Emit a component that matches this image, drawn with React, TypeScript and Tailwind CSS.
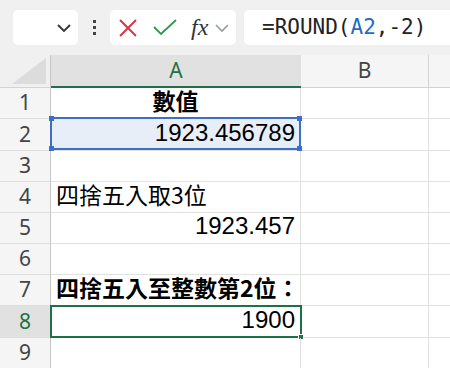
import React from "react";

const numFont = "font-['Liberation_Sans',Arial,sans-serif] leading-none mb-[4px]";
const cjkFont = "font-['Noto_Sans_CJK_TC','Noto_Sans',sans-serif]";
const hdrFont = "font-['Noto_Sans','Open_Sans',sans-serif]";

function Toolbar() {
  return (
    <div className="h-[55px] bg-[#f0f0f0] flex items-center pl-[13px]">
      <div className="w-[65px] h-[35px] bg-white rounded-[5px] flex items-center justify-end pr-[6px]">
        <svg width="16" height="10" viewBox="0 0 16 10">
          <path d="M2 2 L8 8 L14 2" fill="none" stroke="#333" strokeWidth="1.8" />
        </svg>
      </div>
      <div className="w-[32px] flex flex-col items-center gap-[3px]">
        <span className="w-[3px] h-[3px] bg-[#444]" />
        <span className="w-[3px] h-[3px] bg-[#444]" />
        <span className="w-[3px] h-[3px] bg-[#444]" />
      </div>
      <div className="w-[126px] h-[35px] bg-white rounded-[5px] flex items-center pl-[8px]">
        <svg width="20" height="20" viewBox="0 0 20 20">
          <path d="M2 2 L18 18 M18 2 L2 18" stroke="#d9303b" strokeWidth="1.8" />
        </svg>
        <svg width="26" height="20" viewBox="0 0 26 20" className="ml-[14px]">
          <path d="M2 9 L9 16 L24 2" fill="none" stroke="#2e9a4f" strokeWidth="1.8" />
        </svg>
        <span className="ml-[13px] font-['Liberation_Serif',serif] italic text-[24px] leading-none text-[#333] -mt-[2px]">
          fx
        </span>
        <svg width="16" height="10" viewBox="0 0 16 10" className="ml-[6px]">
          <path d="M2 2 L8 8 L14 2" fill="none" stroke="#9a9a9a" strokeWidth="1.6" />
        </svg>
      </div>
      <div className="ml-[8px] flex-1 h-[35px] bg-white rounded-l-[5px] flex items-center pl-[18px]">
        <span className="font-['DejaVu_Sans_Mono',monospace] text-[21px] text-[#222] leading-none">
          =ROUND(<span className="text-[#1f6cc0]">A2</span>,-2)
        </span>
      </div>
    </div>
  );
}

type Row = {
  n: number;
  h: string;
  content?: React.ReactNode;
  align?: string;
  sel?: "ref" | "active";
};

const rows: Row[] = [
  {
    n: 1,
    h: "h-[31px]",
    align: "justify-center",
    content: <span className={`${cjkFont} font-bold text-[23px]`}>數值</span>,
  },
  {
    n: 2,
    h: "h-[32px]",
    align: "justify-end pr-[5px]",
    content: <span className={`${numFont} text-[24px]`}>1923.456789</span>,
    sel: "ref",
  },
  { n: 3, h: "h-[31px]" },
  {
    n: 4,
    h: "h-[31px]",
    align: "justify-start pl-[5px]",
    content: <span className={`${cjkFont} text-[23px]`}>四捨五入取3位</span>,
  },
  {
    n: 5,
    h: "h-[31px]",
    align: "justify-end pr-[5px]",
    content: <span className={`${numFont} text-[24px]`}>1923.457</span>,
  },
  { n: 6, h: "h-[31px]" },
  {
    n: 7,
    h: "h-[31px]",
    align: "justify-start pl-[5px]",
    content: (
      <span className={`${cjkFont} font-bold text-[23px] whitespace-nowrap`}>
        四捨五入至整數第2位：
      </span>
    ),
  },
  {
    n: 8,
    h: "h-[32px]",
    align: "justify-end pr-[5px]",
    content: <span className={`${numFont} text-[24px]`}>1900</span>,
    sel: "active",
  },
  { n: 9, h: "h-[31px]" },
];

export default function App() {
  return (
    <div className="w-[450px] h-[368px] overflow-hidden bg-white">
      <Toolbar />
      <div className={`flex h-[33px] ${hdrFont} text-[21px]`}>
        <div className="w-[51px] bg-[#f0f0f0] border-r border-[#c6c6c6] border-b border-b-[#d4d4d4] flex items-end justify-end">
          <div className="w-0 h-0 border-l-[34px] border-l-transparent border-b-[26px] border-b-[#dcdcdc] mr-[4px] mb-[3px]" />
        </div>
        <div className="w-[250px] bg-[#e1e1e1] border-b-2 border-[#1e7145] flex items-center justify-center text-[#1e7145]">
          A
        </div>
        <div className="w-[128px] bg-[#f5f5f5] border-r border-[#d4d4d4] border-b border-b-[#d4d4d4] flex items-center justify-center text-[#444]">
          B
        </div>
        <div className="flex-1 bg-[#f5f5f5] border-b border-b-[#d4d4d4]" />
      </div>
      {rows.map((r) => (
        <div key={r.n} className={`flex ${r.h}`}>
          <div
            className={`w-[51px] border-r border-[#c6c6c6] border-b border-b-[#dedede] flex items-center justify-center ${hdrFont} text-[21px] ${
              r.sel === "active" ? "bg-[#e1e1e1] text-[#1e7145]" : "bg-[#f5f5f5] text-[#444]"
            }`}
          >
            {r.n}
          </div>
          <div
            className={`relative w-[250px] border-r border-b border-[#e1e1e1] flex items-end pb-[1px] text-black ${
              r.align ?? ""
            } ${r.sel === "ref" ? "bg-[#e8eef8]" : ""}`}
          >
            {r.content}
            {r.sel === "ref" && (
              <div className="absolute -left-[1px] -top-[2px] w-[251px] h-[33px] border-2 border-[#3f6fc2] pointer-events-none">
                <span className="absolute -left-[3px] -top-[3px] w-[5px] h-[5px] bg-[#3f6fc2]" />
                <span className="absolute -right-[3px] -top-[3px] w-[5px] h-[5px] bg-[#3f6fc2]" />
                <span className="absolute -left-[3px] -bottom-[3px] w-[5px] h-[5px] bg-[#3f6fc2]" />
                <span className="absolute -right-[3px] -bottom-[3px] w-[5px] h-[5px] bg-[#3f6fc2]" />
              </div>
            )}
            {r.sel === "active" && (
              <div className="absolute -left-[1px] -top-[1px] w-[252px] h-[33px] border-2 border-[#1e7145] pointer-events-none">
                <span className="absolute -right-[4px] -bottom-[4px] w-[6px] h-[6px] bg-[#1e7145] border border-white" />
              </div>
            )}
          </div>
          <div className="w-[128px] border-r border-b border-[#e1e1e1]" />
          <div className="flex-1 border-b border-[#e1e1e1]" />
        </div>
      ))}
    </div>
  );
}
